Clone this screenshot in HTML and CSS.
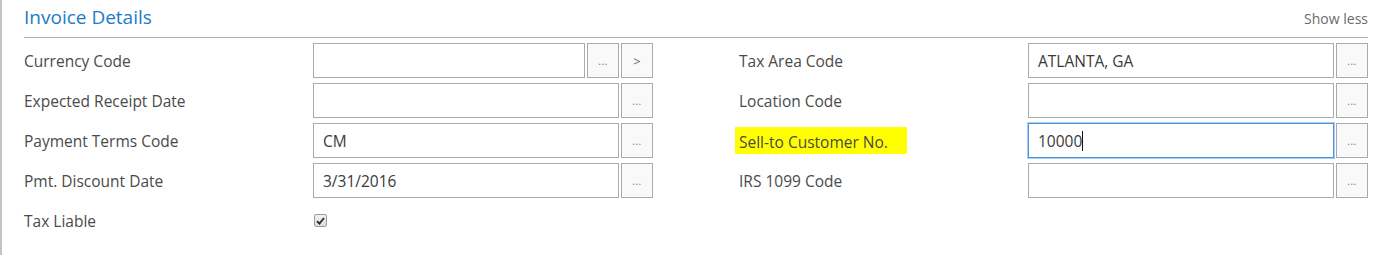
FILE: index.html
```html
<!DOCTYPE html>
<html lang="en">
<head>
    <meta charset="UTF-8">
    <title>Invoice Details</title>
    <link rel="stylesheet" href="styles.css">
</head>
<body>

    <div class="section">
        <div class="section-header">
            <h2>Invoice Details</h2>
            <span class="toggle">Show less</span>
        </div>

        <div class="form">
            <!-- left column -->
            <div class="col">
                <div class="field">
                    <label>Currency Code</label>
                    <div class="control">
                        <div class="box"></div>
                        <div class="btn dots">...</div>
                        <div class="btn">&gt;</div>
                    </div>
                </div>
                <div class="field">
                    <label>Expected Receipt Date</label>
                    <div class="control">
                        <div class="box"></div>
                        <div class="btn dots">...</div>
                    </div>
                </div>
                <div class="field">
                    <label>Payment Terms Code</label>
                    <div class="control">
                        <div class="box">CM</div>
                        <div class="btn dots">...</div>
                    </div>
                </div>
                <div class="field">
                    <label>Pmt. Discount Date</label>
                    <div class="control">
                        <div class="box">3/31/2016</div>
                        <div class="btn dots">...</div>
                    </div>
                </div>
                <div class="field">
                    <label>Tax Liable</label>
                    <div class="control">
                        <span class="check">
                            <svg width="9" height="8" viewBox="0 0 9 8"><path d="M1 4.2 L3.4 6.6 L8 1" fill="none" stroke="#2b2b2b" stroke-width="1.8"/></svg>
                        </span>
                    </div>
                </div>
            </div>

            <!-- right column -->
            <div class="col">
                <div class="field">
                    <label>Tax Area Code</label>
                    <div class="control">
                        <div class="box">ATLANTA, GA</div>
                        <div class="btn dots">...</div>
                    </div>
                </div>
                <div class="field">
                    <label>Location Code</label>
                    <div class="control">
                        <div class="box"></div>
                        <div class="btn dots">...</div>
                    </div>
                </div>
                <div class="field">
                    <label><span class="marker">Sell-to Customer No.</span></label>
                    <div class="control">
                        <div class="box focused">10000<span class="caret"></span></div>
                        <div class="btn dots">...</div>
                    </div>
                </div>
                <div class="field">
                    <label>IRS 1099 Code</label>
                    <div class="control">
                        <div class="box"></div>
                        <div class="btn dots">...</div>
                    </div>
                </div>
            </div>
        </div>
    </div>

</body>
</html>
```

FILE: styles.css
```css
body {
    margin: 0;
    font-family: "Segoe UI", "Open Sans", sans-serif;
    background-color: white;
    color: #333;
    border-left: 2px solid #c4c4c4;
    height: 255px;
    box-sizing: border-box;
}

.section {
    width: 1344px;
    padding-left: 22px;
}

.section-header {
    display: flex;
    justify-content: space-between;
    align-items: baseline;
    height: 37px;
    border-bottom: 1px solid #b3b3b3;
}

.section-header h2 {
    margin: 0;
    padding-top: 4px;
    font-size: 19px;
    font-weight: normal;
    color: #1c7acb;
}

.toggle {
    font-size: 14px;
    color: #6b6b6b;
}

.form {
    display: grid;
    grid-template-columns: 1fr 1fr;
    column-gap: 86px;
    padding-top: 5px;
}

.col {
    display: flex;
    flex-direction: column;
    gap: 5px;
}

.field {
    display: flex;
    align-items: center;
    height: 35px;
}

.field label {
    width: 289px;
    flex-shrink: 0;
    font-size: 15.5px;
    color: #4a4a4a;
}

.control {
    flex: 1;
    display: flex;
    align-items: center;
    gap: 2px;
    height: 100%;
}

.box {
    flex: 1;
    height: 100%;
    box-sizing: border-box;
    display: flex;
    align-items: center;
    padding: 0 9px;
    border: 1px solid #ababab;
    background-color: white;
    font-size: 15.5px;
    color: #3a3a3a;
}

.box.focused {
    border-color: #4a95e0;
    box-shadow: 0 0 0 1px #a9cdf2;
}

.caret {
    display: inline-block;
    width: 1px;
    height: 20px;
    background-color: #111;
}

.btn {
    width: 32px;
    height: 100%;
    box-sizing: border-box;
    flex-shrink: 0;
    display: flex;
    align-items: center;
    justify-content: center;
    border: 1px solid #ababab;
    background-color: #f9f9f9;
    font-size: 13px;
    color: #666;
}

.btn.dots {
    align-items: flex-end;
    padding-bottom: 9px;
    font-size: 10px;
    letter-spacing: 0.5px;
    color: #777;
}

.check {
    width: 13px;
    height: 13px;
    box-sizing: border-box;
    margin-left: 1px;
    display: flex;
    align-items: center;
    justify-content: center;
    border: 1px solid #9c9c9c;
    border-radius: 2px;
    background: linear-gradient(#f2f2f2, #dcdcdc);
}

.marker {
    display: inline-block;
    margin-left: -4px;
    padding: 4px 19px 1px 4px;
    background-color: #ffff00;
}
```
